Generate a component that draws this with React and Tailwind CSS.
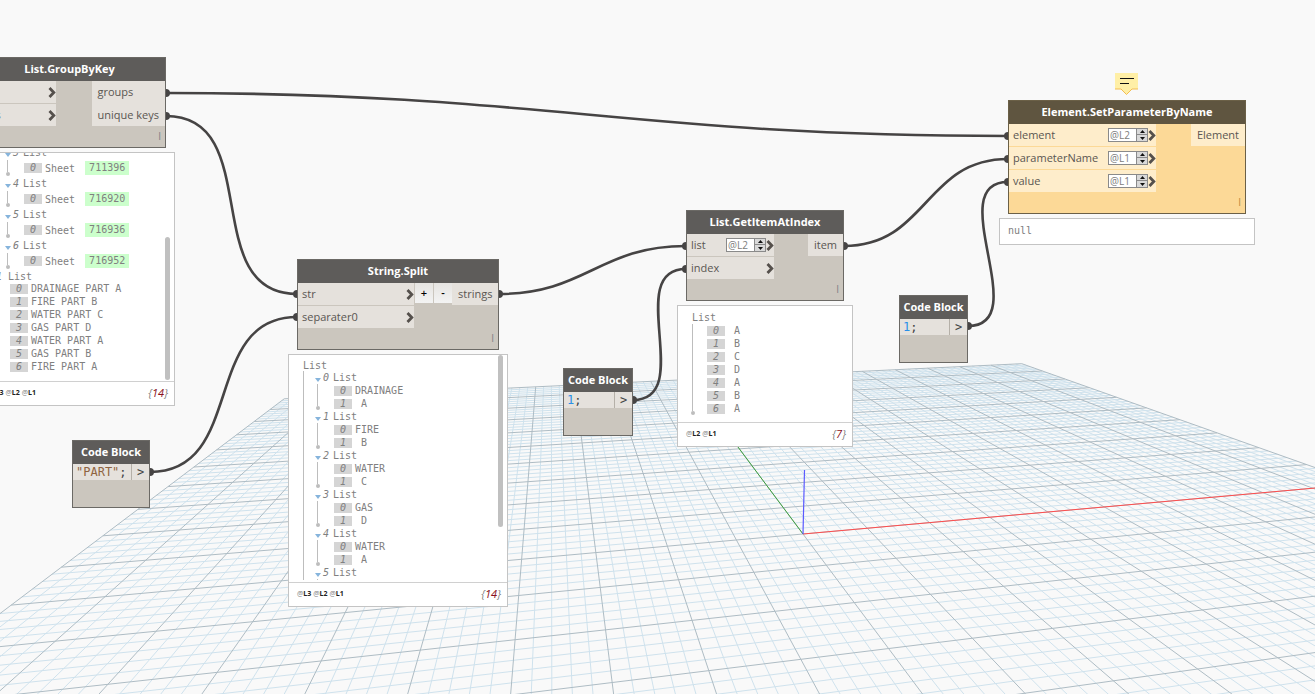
import { useState } from 'react'
import clsx from 'clsx'

const ORIGIN = [803, 534]

// ground plane (major grid units) -> canvas
function project(u, v) {
    const w = 1 + 0.01732 * u - 0.08458 * v
    return [
        ORIGIN[0] + (65.47 * u + 21.3 * v) / w,
        ORIGIN[1] + (-5.88 * u + 28.5 * v) / w,
    ]
}

function linePath(a, b) {
    const [x1, y1] = project(...a)
    const [x2, y2] = project(...b)
    return `M${x1.toFixed(1)} ${y1.toFixed(1)}L${x2.toFixed(1)} ${y2.toFixed(1)}`
}

function buildGrid() {
    const minor = []
    const major = []
    for (let i = -50; i <= 50; i++) {
        const p = i / 5
        const target = i % 5 === 0 ? major : minor
        // stop short of the horizon behind the camera
        const vMax = Math.min(10, (0.95 + 0.01732 * p) / 0.08458)
        const uMin = Math.max(-10, (0.08458 * p - 0.95) / 0.01732)
        target.push(linePath([p, -10], [p, vMax]))
        if (uMin < 10) target.push(linePath([uMin, p], [10, p]))
    }
    return { minor: minor.join(''), major: major.join('') }
}

const grid = buildGrid()
const xAxis = linePath([0, 0], [10, 0])
const yAxis = linePath([0, 0], [0, -10])

const wires = [
    { from: [166, 93], to: [1008, 136] },
    { from: [166, 116], to: [297, 294] },
    { from: [150, 472], to: [297, 317] },
    { from: [499, 294], to: [686, 246] },
    { from: [633, 400], to: [686, 269] },
    { from: [844, 246], to: [1008, 159] },
    { from: [968, 326], to: [1008, 182] },
]

function wirePath({ from: [x1, y1], to: [x2, y2] }) {
    const offset = 0.45 * Math.hypot(x2 - x1, y2 - y1)
    return `M${x1} ${y1}C${x1 + offset} ${y1} ${x2 - offset} ${y2} ${x2} ${y2}`
}

function Backdrop() {
    return (
        <svg className="absolute inset-0 h-full w-full" fill="none" aria-hidden="true">
            <path d={grid.minor} stroke="#cfe2ed" strokeWidth="1" />
            <path d={grid.major} stroke="#aebcc4" strokeWidth="1" />
            <path d={xAxis} stroke="#ff4d4d" strokeWidth="1" />
            <path d={yAxis} stroke="#3fa03f" strokeWidth="1" />
            <path d="M803 534L804.500 470" stroke="#5a5aff" strokeWidth="1.200" />
            {wires.map((w, i) => (
                <g key={i}>
                    <path d={wirePath(w)} stroke="#464444" strokeWidth="2.600" />
                    <circle cx={w.from[0]} cy={w.from[1]} r="4" fill="#464444" />
                    <circle cx={w.to[0]} cy={w.to[1]} r="4" fill="#464444" />
                </g>
            ))}
        </svg>
    )
}

function Chevron() {
    return (
        <svg width="8" height="11" viewBox="0 0 8 11" fill="none" className="shrink-0" aria-hidden="true">
            <path d="M1.500 1L5.800 5.500L1.500 10" stroke="#55504c" strokeWidth="2.800" />
        </svg>
    )
}

function LevelSpinner({ id, initial }) {
    const [level, setLevel] = useState(initial)
    return (
        <div className="flex h-[14px] w-10 shrink-0 border border-[#8a8a8a] bg-white">
            <input
                id={id}
                type="text"
                value={`@L${level}`}
                readOnly
                className="w-[27px] min-w-0 pl-px text-[10px] leading-3 text-[#7d7d7d] outline-none"
            />
            <div className="flex flex-1 flex-col border-l border-[#8a8a8a]">
                <button
                    aria-label="Level up"
                    onClick={() => setLevel(level + 1)}
                    className="flex h-[6px] items-center justify-center border-b border-[#8a8a8a] bg-[#d9d9d9]"
                >
                    <svg width="5" height="3" viewBox="0 0 5 3"><path d="M0 3L2.500 0L5 3z" fill="#111" /></svg>
                </button>
                <button
                    aria-label="Level down"
                    onClick={() => setLevel(Math.max(1, level - 1))}
                    className="flex h-[6px] items-center justify-center bg-[#d9d9d9]"
                >
                    <svg width="5" height="3" viewBox="0 0 5 3"><path d="M0 0L2.500 3L5 0z" fill="#111" /></svg>
                </button>
            </div>
        </div>
    )
}

function Node({ title, className, warning, children }) {
    return (
        <section
            className={clsx(
                'absolute border',
                warning ? 'border-[#6b6047] bg-[#fcd997]' : 'border-[#6b6965] bg-[#cbc6be]',
                className
            )}
        >
            <h2
                className={clsx(
                    'flex h-[23px] items-center justify-center text-[11px] font-bold whitespace-nowrap text-white',
                    warning ? 'bg-[#5f5540]' : 'bg-[#5e5c5a]'
                )}
            >
                {title}
            </h2>
            {children}
        </section>
    )
}

function FunctionNode({ title, className, inputsClass, inputs, outputs, warning, variadic }) {
    const port = warning ? 'bg-[#feedcb]' : 'bg-[#e5e1dc]'
    return (
        <Node title={title} className={className} warning={warning}>
            <div className="flex items-start justify-between">
                <div className={clsx('flex shrink-0 flex-col gap-px', inputsClass)}>
                    {inputs.map(p => (
                        <div key={p.name} className={clsx('flex h-[22px] items-center pl-1', port)}>
                            <label htmlFor={p.level && `${title}-${p.name}`} className="flex-1">{p.name}</label>
                            {p.level && <LevelSpinner id={`${title}-${p.name}`} initial={p.level} />}
                            <Chevron />
                        </div>
                    ))}
                </div>
                {variadic && (
                    <div className="flex flex-1 gap-px pl-px">
                        <button className="h-5 w-[18px] bg-linear-to-b from-[#e6e4e1] to-[#f3f3f3] text-[11px] leading-4 font-semibold text-black">+</button>
                        <button className="h-5 w-[18px] bg-linear-to-b from-[#e6e4e1] to-[#f3f3f3] text-[11px] leading-4 font-semibold text-black">-</button>
                    </div>
                )}
                <div className="flex flex-col">
                    {outputs.map((name, i) => (
                        <div key={name} className={clsx('flex items-center px-[6px] whitespace-nowrap', i < outputs.length - 1 ? 'h-[23px]' : 'h-[22px]', port)}>
                            {name}
                        </div>
                    ))}
                </div>
            </div>
            <div className={clsx('pr-1 text-right text-[10px] leading-[21px]', warning ? 'text-[#b98a3c]' : 'text-[#7d8086]')}>I</div>
        </Node>
    )
}

function CodeBlock({ className, children }) {
    return (
        <Node title="Code Block" className={className}>
            <div className="flex h-4 items-center bg-[#e5e1dc] font-['DejaVu_Sans_Mono',monospace] text-xs leading-4">
                <code className="flex-1 pl-[3px] font-['DejaVu_Sans_Mono',monospace] text-[#444]">{children}</code>
                <span className="h-4 w-[18px] border-l border-[#b5b0a8] text-center text-[#444]">&gt;</span>
            </div>
            <div className="h-[27px]" />
        </Node>
    )
}

function Preview({ className, levels, count, children, thumb }) {
    return (
        <section className={clsx("absolute flex flex-col border border-[#c4c4c4] bg-white font-['DejaVu_Sans_Mono',monospace] text-[10px] text-[#808080]", className)}>
            <div className="flex min-h-0 flex-1">
                <div className="min-w-0 flex-1 overflow-hidden whitespace-pre">{children}</div>
                {thumb && <div className={clsx('mr-1 w-[5px] shrink-0 rounded-full bg-[#c0c0c0]', thumb)} />}
            </div>
            <footer className="flex h-6 shrink-0 items-center justify-between border-t border-[#d0d0d0] pr-[6px] pl-2 font-['Open_Sans',sans-serif]">
                <div className="flex gap-[2px] text-[7px]">
                    {levels.map(l => (
                        <span key={l}>@<b className="text-[#222]">{l}</b></span>
                    ))}
                </div>
                <div className="text-[11px] italic">
                    {'{'}<span className="text-[#8b1020]">{count}</span>{'}'}
                </div>
            </footer>
        </section>
    )
}

function Item({ index, children, tall }) {
    return (
        <div className={clsx('flex items-center', tall ? 'h-4' : 'h-[13px]')}>
            <span className="mr-[3px] h-[10px] w-[18px] bg-[#d5d5d5] text-center leading-[10px] italic">{index}</span>
            {children}
        </div>
    )
}

function Branch({ index, tall, children }) {
    return (
        <div>
            <div className={clsx('flex items-center', tall ? 'h-[15px]' : 'h-[13px]')}>
                <svg width="6" height="4" viewBox="0 0 6 4" className="mt-[5px] mr-[2px]" aria-hidden="true">
                    <path d="M0 0H6L3 4z" fill="#86b4dc" />
                </svg>
                <span className="mr-1 italic">{index}</span>
                <span>List</span>
            </div>
            <div className="flex">
                <div className="flex w-[19px] flex-col items-start pl-px">
                    <div className="ml-px w-px flex-1 bg-[#bdbdbd]" />
                    <div className="h-1 w-1 rounded-full bg-[#bdbdbd]" />
                </div>
                <div>{children}</div>
            </div>
        </div>
    )
}

const sheets = [
    { index: 3, id: '711396' },
    { index: 4, id: '716920' },
    { index: 5, id: '716936' },
    { index: 6, id: '716952' },
]

const keys = ['DRAINAGE PART A', 'FIRE PART B', 'WATER PART C', 'GAS PART D', 'WATER PART A', 'GAS PART B', 'FIRE PART A']

const splits = [
    ['DRAINAGE', ' A'],
    ['FIRE', ' B'],
    ['WATER', ' C'],
    ['GAS', ' D'],
    ['WATER', ' A'],
    ['GAS', ' B'],
]

const letters = ['A', 'B', 'C', 'D', 'A', 'B', 'A']

export default function App() {
    return (
        <main className="relative h-screen w-full overflow-hidden bg-[#f9f9f9] font-['Open_Sans',sans-serif] text-[11px] text-[#5a5652]">
            <Backdrop />

            <FunctionNode
                title="List.GroupByKey"
                className="top-[57px] left-[-27px] w-[193px]"
                inputsClass="w-[82px]"
                inputs={[{ name: 'list' }, { name: 'keys' }]}
                outputs={['groups', 'unique keys']}
            />
            <Preview className="top-[152px] left-[-36px] h-[254px] w-[211px]" levels={['L4', 'L3', 'L2', 'L1']} count={14} thumb="mt-[84px] mb-px">
                <div className="-mt-2 pl-10">
                    {sheets.map(s => (
                        <Branch key={s.id} index={s.index} tall>
                            <Item index={0} tall>
                                <span>Sheet</span>
                                <span className="ml-[10px] h-[14px] bg-[#ccffcc] px-1 leading-[14px]">{s.id}</span>
                            </Item>
                        </Branch>
                    ))}
                </div>
                <div className="h-[13px] pl-[31px] leading-4"><i>1</i> List</div>
                <div className="pl-[45px]">
                    {keys.map((k, i) => <Item key={k} index={i}>{k}</Item>)}
                </div>
            </Preview>

            <CodeBlock className="top-[440px] left-[72px] w-[78px]">
                <span className="text-[#8f6440]">"PART"</span>;
            </CodeBlock>

            <FunctionNode
                title="String.Split"
                className="top-[259px] left-[297px] w-[202px]"
                inputsClass="w-[116px]"
                inputs={[{ name: 'str' }, { name: 'separater0' }]}
                outputs={['strings']}
                variadic
            />
            <Preview className="top-[354px] left-[288px] h-[253px] w-[220px]" levels={['L3', 'L2', 'L1']} count={14} thumb="mb-[55px]">
                <div className="flex h-full flex-col pt-1 pb-[2px] pl-[14px]">
                    <div className="h-3 leading-[14px]">List</div>
                    <div className="min-h-0 flex-1 overflow-hidden border-l border-[#bdbdbd] pl-[11px]">
                        {splits.map((s, i) => (
                            <Branch key={i} index={i}>
                                <Item index={0}>{s[0]}</Item>
                                <Item index={1}>{s[1]}</Item>
                            </Branch>
                        ))}
                    </div>
                </div>
            </Preview>

            <CodeBlock className="top-[368px] left-[563px] w-[70px]">
                <span className="text-[#2a8fe8]">1</span>;
            </CodeBlock>

            <FunctionNode
                title="List.GetItemAtIndex"
                className="top-[210px] left-[686px] w-[158px]"
                inputsClass="w-[87px]"
                inputs={[{ name: 'list', level: 2 }, { name: 'index' }]}
                outputs={['item']}
            />
            <Preview className="top-[305px] left-[677px] h-[142px] w-[176px]" levels={['L2', 'L1']} count={7}>
                <div className="pt-[5px] pl-[14px]">
                    <div className="h-[13px] leading-[14px]">List</div>
                    <div className="flex">
                        <div className="flex w-[15px] flex-col">
                            <div className="w-px flex-1 bg-[#bdbdbd]" />
                            <div className="-ml-px h-1 w-1 rounded-full bg-[#bdbdbd]" />
                        </div>
                        <div>
                            {letters.map((l, i) => <Item key={i} index={i}>{` ${l}`}</Item>)}
                        </div>
                    </div>
                </div>
            </Preview>

            <CodeBlock className="top-[295px] left-[899px] w-[69px]">
                <span className="text-[#2a8fe8]">1</span>;
            </CodeBlock>

            <svg className="absolute top-[73px] left-[1115px]" width="23" height="23" viewBox="0 0 23 23" fill="none" aria-hidden="true">
                <path d="M0 0H23V16H17L11.500 21.500L6 16H0z" fill="#ffefa6" />
                <path d="M0 16H6L11.500 21.500L17 16H23" stroke="#f3bd52" strokeWidth="1" />
                <path d="M5 5.500H19M5 10.500H14" stroke="#111" strokeWidth="1" />
            </svg>
            <FunctionNode
                title="Element.SetParameterByName"
                className="top-[100px] left-[1008px] w-[238px]"
                inputsClass="w-[147px]"
                inputs={[{ name: 'element', level: 2 }, { name: 'parameterName', level: 1 }, { name: 'value', level: 1 }]}
                outputs={['Element']}
                warning
            />
            <div className="absolute top-[218px] left-[999px] h-[27px] w-[256px] border border-[#c4c4c4] bg-white px-2 font-['DejaVu_Sans_Mono',monospace] text-[10px] leading-6 text-[#808080]">
                null
            </div>
        </main>
    )
}
